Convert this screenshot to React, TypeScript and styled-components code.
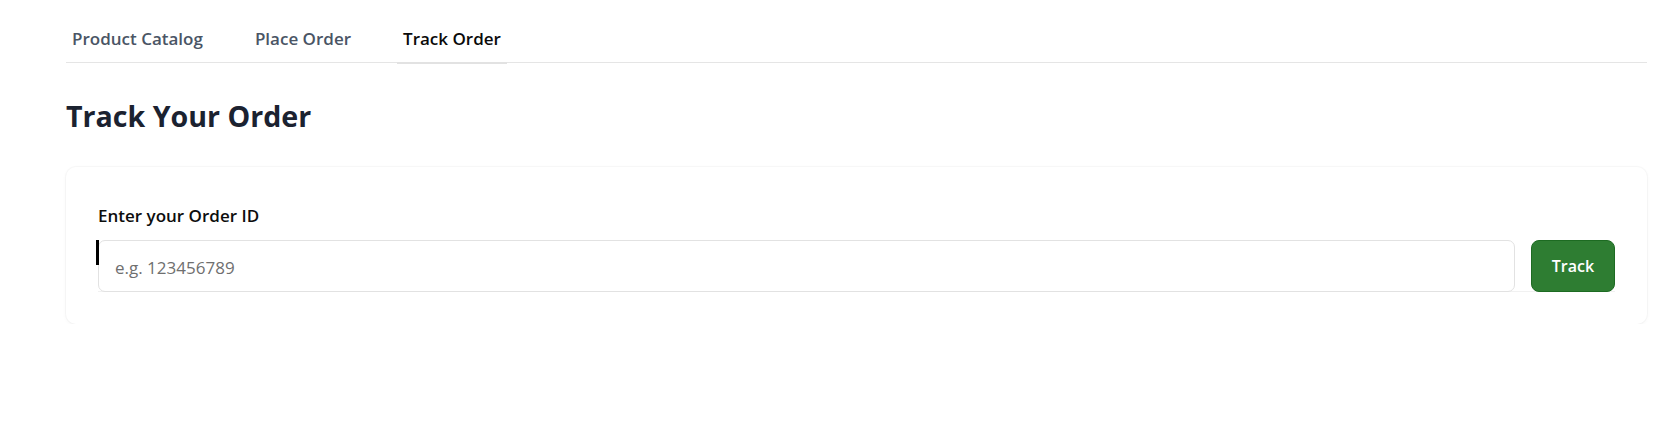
import React from "react";
import styled, { createGlobalStyle } from "styled-components";

const GlobalStyle = createGlobalStyle`
  html, body {
    margin: 0;
    padding: 0;
    background: #ffffff;
  }
  body {
    font-family: "Open Sans", "Noto Sans", "Liberation Sans", sans-serif;
    -webkit-font-smoothing: antialiased;
  }
  * { box-sizing: border-box; }
`;

const Page = styled.div`
  padding: 0 17px 0 66px;
`;

const TabBar = styled.nav`
  display: flex;
  gap: 40px;
  border-bottom: 1px solid #e5e5e5;
`;

const Tab = styled.button<{ $active?: boolean }>`
  appearance: none;
  background: none;
  border: none;
  border-bottom: 2px solid ${(p) => (p.$active ? "#e2e2e2" : "transparent")};
  margin: 0 0 -2px 0;
  padding: 27px 6px 11px;
  font-family: inherit;
  font-size: 17px;
  line-height: 24px;
  font-weight: 600;
  color: ${(p) => (p.$active ? "#0a0a0a" : "#4a5565")};
  cursor: pointer;
`;

const Title = styled.h1`
  margin: 35px 0 0 0;
  font-size: 28.6px;
  line-height: 35px;
  font-weight: 700;
  color: #1b2230;
`;

const Card = styled.section`
  margin-top: 34px;
  padding: 32px;
  background: #ffffff;
  border-radius: 10px;
  box-shadow: 0 0 0 1px rgba(0, 0, 0, 0.025), 0 1px 4px rgba(0, 0, 0, 0.04);
`;

const Label = styled.label`
  display: block;
  margin-bottom: 8px;
  font-size: 17px;
  line-height: 33px;
  font-weight: 600;
  color: #0d0d0d;
`;

const Row = styled.div`
  position: relative;
  display: flex;
  gap: 16px;

  &::after {
    content: "";
    position: absolute;
    left: 0;
    right: 0;
    bottom: 0;
    height: 1px;
    background: #f1f1f1;
  }
`;

const Caret = styled.span`
  position: absolute;
  left: -2px;
  top: 0;
  width: 3px;
  height: 25px;
  background: #000;
  z-index: 2;
`;

const Input = styled.input`
  position: relative;
  z-index: 1;
  flex: 1;
  height: 52px;
  padding: 3px 16px 0;
  border: 1px solid #e2e2e2;
  border-radius: 7px;
  font-family: inherit;
  font-size: 17px;
  color: #111;
  background: #fff;
  outline: none;

  &::placeholder {
    color: #6f6f6f;
  }
`;

const TrackButton = styled.button`
  position: relative;
  z-index: 1;
  width: 84px;
  height: 52px;
  border: 1px solid #1d6b22;
  border-radius: 8px;
  background: #2e7d32;
  color: #ffffff;
  font-family: inherit;
  font-size: 16px;
  font-weight: 600;
  padding: 0;
  cursor: pointer;
`;

export default function App() {
  return (
    <>
      <GlobalStyle />
      <Page>
        <TabBar>
          <Tab>Product Catalog</Tab>
          <Tab>Place Order</Tab>
          <Tab $active>Track Order</Tab>
        </TabBar>
        <Title>Track Your Order</Title>
        <Card>
          <Label htmlFor="order-id">Enter your Order ID</Label>
          <Row>
            <Caret />
            <Input id="order-id" placeholder="e.g. 123456789" />
            <TrackButton>Track</TrackButton>
          </Row>
        </Card>
      </Page>
    </>
  );
}
